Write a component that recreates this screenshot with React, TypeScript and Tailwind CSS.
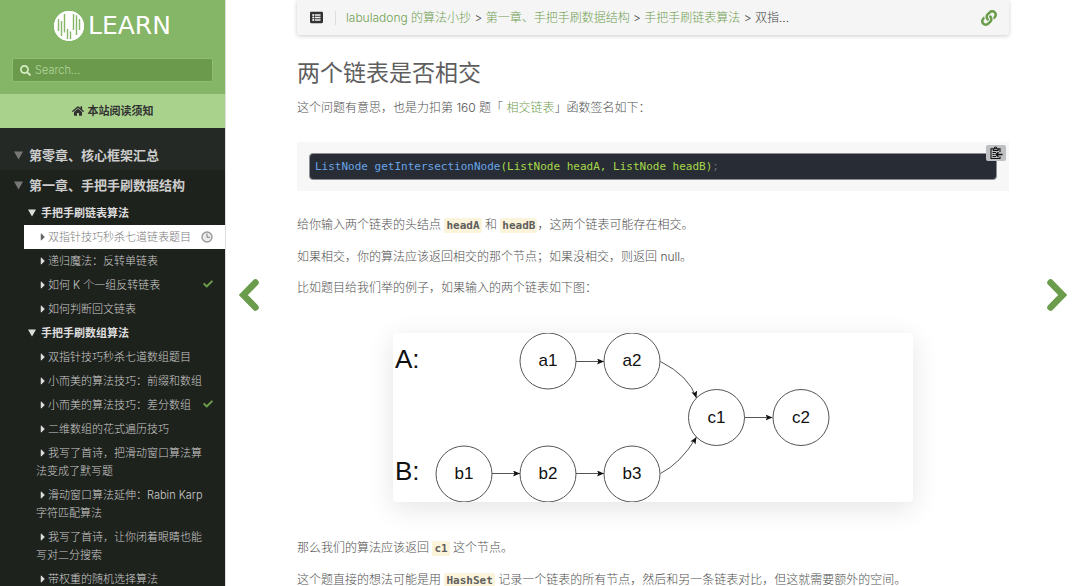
import React from 'react';
import { FaCaretRight, FaCheck, FaHome, FaLink, FaListAlt, FaSearch } from 'react-icons/fa';

type Status = 'done' | 'reading';

interface Article {
  title: string;
  status?: Status;
}

const SECTIONS: { title: string; articles: Article[] }[] = [
  {
    title: '手把手刷链表算法',
    articles: [
      { title: '双指针技巧秒杀七道链表题目', status: 'reading' },
      { title: '递归魔法：反转单链表' },
      { title: '如何 K 个一组反转链表', status: 'done' },
      { title: '如何判断回文链表' },
    ],
  },
  {
    title: '手把手刷数组算法',
    articles: [
      { title: '双指针技巧秒杀七道数组题目' },
      { title: '小而美的算法技巧：前缀和数组' },
      { title: '小而美的算法技巧：差分数组', status: 'done' },
      { title: '二维数组的花式遍历技巧' },
      { title: '我写了首诗，把滑动窗口算法算法变成了默写题' },
      { title: '滑动窗口算法延伸：Rabin Karp 字符匹配算法' },
      { title: '我写了首诗，让你闭着眼睛也能写对二分搜索' },
      { title: '带权重的随机选择算法' },
    ],
  },
];

const NODES = [
  { label: 'a1', x: 155, y: 28 },
  { label: 'a2', x: 239, y: 28 },
  { label: 'b1', x: 71, y: 141 },
  { label: 'b2', x: 155, y: 141 },
  { label: 'b3', x: 239, y: 141 },
  { label: 'c1', x: 323.5, y: 84.5 },
  { label: 'c2', x: 408, y: 84.5 },
];

const Triangle: React.FC<{ className: string }> = ({ className }) => (
  <svg viewBox="0 0 10 10" className={`shrink-0 ${className}`} fill="currentColor" aria-hidden="true">
    <path d="M0 0.5h10L5 9.5z" />
  </svg>
);

const Logo = () => (
  <svg viewBox="0 0 30 30" className="size-[30px]" aria-hidden="true">
    <circle cx="15" cy="15" r="15" fill="#fff" />
    <g fill="none" stroke="#85b567" strokeWidth="1.4">
      <path d="M4.500 8v12M7.500 10v15M10.500 3v18.500M13.500 18v10M16.500 20.500v8M19.500 3v16M22.500 4v20M25.500 8v11" />
    </g>
    <circle cx="15" cy="15" r="14.100" fill="none" stroke="#fff" strokeWidth="1.800" />
  </svg>
);

const ClockIcon = () => (
  <svg viewBox="0 0 12 12" className="size-3" aria-hidden="true">
    <circle cx="6" cy="6" r="5" fill="#ececec" stroke="#9a9a9a" strokeWidth="1.400" />
    <path d="M6 2.500V6.300h3" fill="none" stroke="#777" strokeWidth="0.900" />
  </svg>
);

const ClipboardIcon = () => (
  <svg viewBox="0 0 14 14" className="size-3.5" fill="none" stroke="#111" strokeWidth="1.100" aria-hidden="true">
    <path d="M11 6V2.800H2v9.700h9V10.500M4 4.500h5.500M4 4.300c0-1.300 1.200-1 1.400-2.300.2-1.400 2-1.400 2.200 0 .2 1.300 1.900 1 1.900 2.300M3.500 6.500h3.500M3.500 8.500h2M3.500 10.500h3.500" />
    <path d="M13.500 8.500H7.500M9.500 6.300 7.200 8.500l2.300 2.200" strokeWidth="1.500" />
  </svg>
);

const Chevron: React.FC<{ flip?: boolean }> = ({ flip }) => (
  <svg viewBox="0 0 20 32" className="h-8 w-5" fill="none" stroke="#6a9c4b" strokeWidth="6.500" strokeLinecap="round" aria-hidden="true">
    <path d={flip ? 'M3.500 3.500 15.700 16 3.500 28.500' : 'M16.500 3.500 4.300 16l12.200 12.500'} />
  </svg>
);

const Code: React.FC<{ children: React.ReactNode }> = ({ children }) => (
  <code className="rounded-xs bg-[#fcf4da] px-0.5 py-px font-['DejaVu_Sans_Mono',monospace] text-[11px] font-bold text-[#5e5e5e]">
    {children}
  </code>
);

const ArticleLink: React.FC<{ article: Article }> = ({ article }) => {
  const active = article.status === 'reading';
  return (
    <li className={active ? 'bg-white text-[#7c7c7c]' : 'text-[#ccc]'}>
      <a href="#article" className="flex items-start py-[3px] pr-3 pl-3">
        <span className="flex-1 pr-1">
          <FaCaretRight className={`mr-0.5 mb-0.5 ml-1 inline h-3 w-1.5 ${active ? 'text-[#666]' : 'text-[#ddd]'}`} />
          {article.title}
        </span>
        {article.status === 'done' && <FaCheck className="mt-[3px] size-2.5 text-[#6a9c4b]" />}
        {active && <span className="mt-[3px]"><ClockIcon /></span>}
      </a>
    </li>
  );
};

const Sidebar = () => (
  <aside className="w-[225px] shrink-0 overflow-hidden bg-[#1e221d]">
    <div className="bg-[#85b567] px-3 pt-[11px] pb-3">
      <a href="#home" className="flex h-[30px] items-center justify-center gap-1 text-white">
        <Logo />
        <span className="font-['DejaVu_Sans',sans-serif] text-[25px] leading-[30px] font-normal">LEARN</span>
      </a>
      <label className="mt-[17px] flex h-6 items-center gap-1 rounded-xs border border-[#8fbe72] bg-[#6b9a4d] px-[7px]">
        <FaSearch className="size-[11px] text-[#d3ecc3]" />
        <input
          type="search"
          aria-label="Search"
          placeholder="Search..."
          className="min-w-0 flex-1 bg-transparent text-[11px] font-light text-white outline-none placeholder:text-[#b3d69c]"
        />
      </label>
    </div>
    <a href="#guide" className="flex h-[34px] items-center justify-center gap-1 bg-[#a9d38d] text-[11px] font-bold text-[#323232]">
      <FaHome className="size-3" />
      本站阅读须知
    </a>

    {/* Chapters */}
    <nav className="text-[11px] leading-[18px] font-light">
      <div className="bg-[#242925] pt-3">
        <button className="flex h-[30px] w-full items-center gap-1.5 pl-3.5 text-[13px] font-bold text-[#ccc]">
          <Triangle className="size-[9px] text-[#777]" />
          第零章、核心框架汇总
        </button>
      </div>
      <button className="flex h-[30px] w-full items-center gap-1.5 pl-3.5 text-[13px] font-bold text-[#ccc]">
        <Triangle className="size-[9px] text-[#777]" />
        第一章、手把手刷数据结构
      </button>
      <ul className="pt-px pl-6">
        {SECTIONS.map(section => (
          <li key={section.title}>
            <button className="flex h-6 w-full items-center gap-[5px] pl-1 font-bold text-[#ddd]">
              <Triangle className="size-2" />
              {section.title}
            </button>
            <ul>
              {section.articles.map(article => (
                <ArticleLink key={article.title} article={article} />
              ))}
            </ul>
          </li>
        ))}
      </ul>
    </nav>
  </aside>
);

const TopBar = () => (
  <header className="flex h-[35px] items-center rounded-b-xs bg-[#f5f5f5] px-3 text-[#444] shadow-[0_1px_4px_rgba(0,0,0,0.2)]">
    <button aria-label="目录" className="pr-3 pl-px">
      <FaListAlt className="size-[13px] text-[#333]" />
    </button>
    <nav className="flex-1 truncate border-l border-[#ddd] pl-2.5 leading-[14px]">
      <a href="#root" className="text-[#6fa052]">labuladong 的算法小抄</a>
      {' > '}
      <a href="#chapter" className="text-[#6fa052]">第一章、手把手刷数据结构</a>
      {' > '}
      <a href="#section" className="text-[#6fa052]">手把手刷链表算法</a>
      {' > 双指...'}
    </nav>
    <a href="#link" aria-label="链接">
      <FaLink className="size-4 text-[#6a9c4b]" />
    </a>
  </header>
);

const ListDiagram = () => (
  <svg
    viewBox="0 0 520 169"
    role="img"
    aria-label="相交链表"
    className="mx-auto mt-[35px] block w-[520px] max-w-full rounded-sm bg-white font-['Liberation_Sans',sans-serif] font-normal shadow-[0_6px_28px_rgba(0,0,0,0.11)]"
  >
    <defs>
      <marker id="arrow" viewBox="0 0 7 6" refX="7" refY="3" markerWidth="7" markerHeight="6" markerUnits="userSpaceOnUse" orient="auto">
        <path d="M0 0 7 3 0 6 1.500 3z" fill="#111" />
      </marker>
    </defs>
    <g fill="none" stroke="#555" strokeWidth="1">
      {NODES.map(node => (
        <circle key={node.label} cx={node.x} cy={node.y} r="28" />
      ))}
      <path d="M183 28.500h28" markerEnd="url(#arrow)" />
      <path d="M99 140.500h28" markerEnd="url(#arrow)" />
      <path d="M183 140.500h28" markerEnd="url(#arrow)" />
      <path d="M351.500 84.500h28" markerEnd="url(#arrow)" />
      <path d="M267.500 28.500Q296 43 303.500 65" markerEnd="url(#arrow)" />
      <path d="M267.500 140.500Q288 130 303.500 104" markerEnd="url(#arrow)" />
    </g>
    <g fill="#111" fontSize="17" textAnchor="middle">
      {NODES.map(node => (
        <text key={node.label} x={node.x} y={node.y + 5}>{node.label}</text>
      ))}
    </g>
    <g fill="#111" fontSize="26">
      <text x="2" y="35">A:</text>
      <text x="2" y="147">B:</text>
    </g>
  </svg>
);

export default function App() {
  return (
    <div className="flex h-screen overflow-hidden bg-white font-[Inter,'Noto_Sans_CJK_SC',sans-serif] text-[12px] font-light">
      <Sidebar />
      <div className="flex h-screen w-[72px] shrink-0 items-center border-l border-[#ddd] pt-1 pl-[13px]">
        <a href="#prev" aria-label="上一篇"><Chevron /></a>
      </div>
      <main className="min-w-0 flex-1 text-[#505050]">
        <TopBar />
        <article className="leading-5">
          <h2 className="mt-5 text-[23px] leading-9 font-normal text-[#5e5e5e]">两个链表是否相交</h2>
          <p className="mt-[7px]">
            这个问题有意思，也是力扣第 160 题「 <a href="#problem" className="text-[#6fa052]">相交链表</a>」函数签名如下：
          </p>
          <div className="relative mt-6 bg-[#f7f7f7] px-3 py-[11px]">
            <pre className="overflow-hidden rounded-sm border border-[#8d8f94] bg-[#282c34] px-[5px] py-1 text-[11px] leading-[17px] font-normal text-[#a6d949]">
              <code className="block font-['DejaVu_Sans_Mono',monospace]">
                <span className="text-[#67a4e8]">ListNode getIntersectionNode</span>
                {'(ListNode headA, ListNode headB)'}
                <span className="text-[#6b6f76]">;</span>
              </code>
            </pre>
            <button aria-label="复制" className="absolute top-[3px] right-[3px] flex h-4 w-5 items-center justify-center rounded-xs bg-[#bfc0c2]">
              <ClipboardIcon />
            </button>
          </div>
          <p className="mt-6">
            给你输入两个链表的头结点 <Code>headA</Code> 和 <Code>headB</Code>，这两个链表可能存在相交。
          </p>
          <p className="mt-[11px]">如果相交，你的算法应该返回相交的那个节点；如果没相交，则返回 null。</p>
          <p className="mt-[11px]">比如题目给我们举的例子，如果输入的两个链表如下图：</p>
          <ListDiagram />
          <p className="mt-9">
            那么我们的算法应该返回 <Code>c1</Code> 这个节点。
          </p>
          <p className="mt-[11px]">
            这个题直接的想法可能是用 <Code>HashSet</Code> 记录一个链表的所有节点，然后和另一条链表对比，但这就需要额外的空间。
          </p>
        </article>
      </main>
      <div className="flex h-screen w-[71px] shrink-0 items-center justify-end pt-1 pr-[13px]">
        <a href="#next" aria-label="下一篇"><Chevron flip /></a>
      </div>
    </div>
  );
}
